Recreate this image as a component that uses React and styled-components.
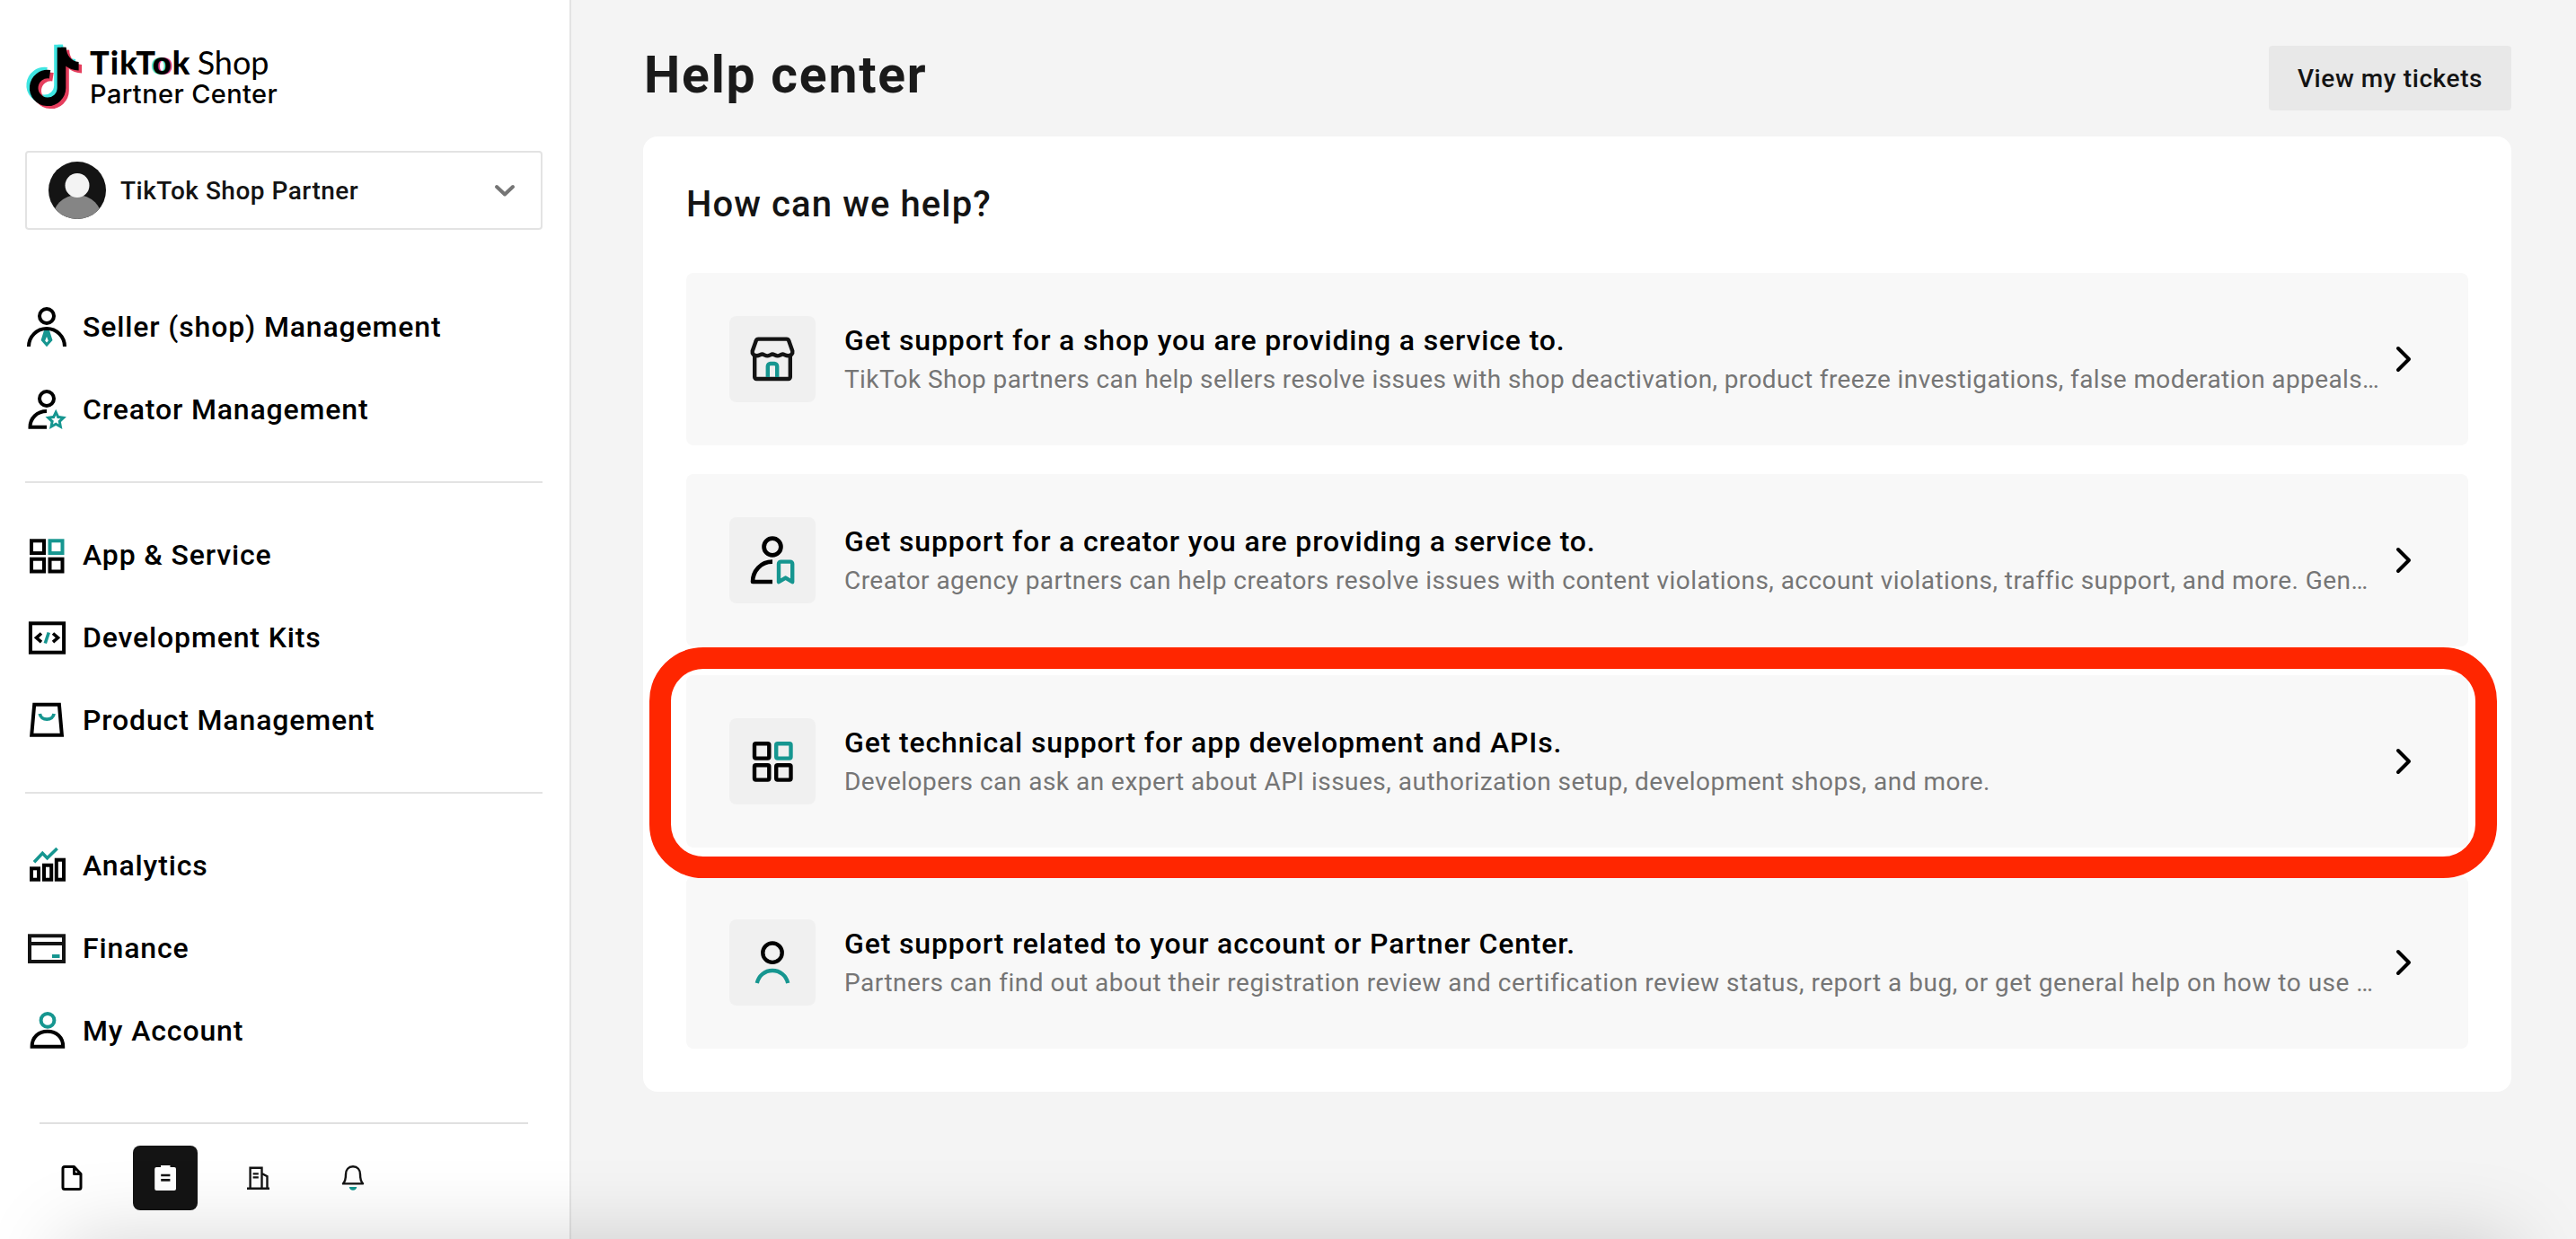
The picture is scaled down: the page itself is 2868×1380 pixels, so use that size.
import React from "react";
import styled, { createGlobalStyle } from "styled-components";

const BLACK = "#000000";
const INK = "#141414";
const GRAY = "#757575";
const LINE = "#e3e3e3";
const TEAL = "#169690";
const CYAN = "#3fe5e1";
const RED = "#e53e5d";
const HIGHLIGHT = "#ff2600";

const NAV_GROUPS = [
  [
    { label: "Seller (shop) Management", Icon: SellerIcon },
    { label: "Creator Management", Icon: CreatorIcon },
  ],
  [
    { label: "App & Service", Icon: AppIcon },
    { label: "Development Kits", Icon: DevIcon },
    { label: "Product Management", Icon: ProductIcon },
  ],
  [
    { label: "Analytics", Icon: AnalyticsIcon },
    { label: "Finance", Icon: FinanceIcon },
    { label: "My Account", Icon: AccountIcon },
  ],
];

const TOPICS = [
  {
    title: "Get support for a shop you are providing a service to.",
    desc: "TikTok Shop partners can help sellers resolve issues with shop deactivation, product freeze investigations, false moderation appeals…",
    tracking: 0.39,
    Icon: ShopArt,
  },
  {
    title: "Get support for a creator you are providing a service to.",
    desc: "Creator agency partners can help creators resolve issues with content violations, account violations, traffic support, and more. Gen…",
    tracking: 0.45,
    Icon: CreatorArt,
  },
  {
    title: "Get technical support for app development and APIs.",
    desc: "Developers can ask an expert about API issues, authorization setup, development shops, and more.",
    tracking: 0.49,
    Icon: AppArt,
    highlighted: true,
  },
  {
    title: "Get support related to your account or Partner Center.",
    desc: "Partners can find out about their registration review and certification review status, report a bug, or get general help on how to use …",
    tracking: 0.51,
    Icon: AccountArt,
  },
];

export default function App() {
  return (
    <Page>
      <GlobalStyle />
      <Sidebar>
        <Logo>
          <LogoMark />
          <LogoText>
            <LogoLine>
              <Brand>
                TikT<GlitchO>o</GlitchO>k
              </Brand>
              <Shop>Shop</Shop>
            </LogoLine>
            <SubLine>Partner Center</SubLine>
          </LogoText>
        </Logo>
        <AccountSelect>
          <Avatar />
          <AccountName>TikTok Shop Partner</AccountName>
          <svg width="24" height="16" viewBox="0 0 24 16" fill="none">
            <path d="M3 4l9 8.5L21 4" stroke="#757575" strokeWidth="4" strokeLinecap="round" strokeLinejoin="round" />
          </svg>
        </AccountSelect>
        <Nav>
          {NAV_GROUPS.map((group, i) => (
            <NavGroup key={i}>
              {group.map(({ label, Icon }) => (
                <NavItem key={label}>
                  <Icon />
                  <span>{label}</span>
                </NavItem>
              ))}
            </NavGroup>
          ))}
        </Nav>
        <Tools>
          <ToolBtn>
            <DocIcon />
          </ToolBtn>
          <ToolBtn $active>
            <ClipboardIcon />
          </ToolBtn>
          <ToolBtn>
            <BuildingIcon />
          </ToolBtn>
          <ToolBtn>
            <BellIcon />
          </ToolBtn>
        </Tools>
      </Sidebar>
      <Main>
        <Header>
          <Title>Help center</Title>
          <TicketsBtn>View my tickets</TicketsBtn>
        </Header>
        <Card>
          <CardTitle>How can we help?</CardTitle>
          <TopicList>
            {TOPICS.map(({ title, desc, tracking, Icon, highlighted }) => (
              <Topic key={title}>
                <TopicIcon>
                  <Icon />
                </TopicIcon>
                <TopicText>
                  <TopicTitle>{title}</TopicTitle>
                  <TopicDesc $tracking={tracking}>{desc}</TopicDesc>
                </TopicText>
                <Arrow />
                {highlighted && <Highlight />}
              </Topic>
            ))}
          </TopicList>
        </Card>
      </Main>
      <BottomShade />
    </Page>
  );
}

function LogoMark() {
  const note = (
    <>
      <path d="M40.5 6.7V52a15.4 15.4 0 1 1-13-15.3" fill="none" stroke="currentColor" strokeWidth="9.6" />
      <path d="M40 6.7h5.6c.4 9 6 15.6 14 16.2v9.6c-6-.2-11-2.2-15-5.2z" fill="currentColor" />
    </>
  );
  return (
    <svg width="68" height="78" viewBox="0 0 68 78">
      <g color={CYAN} transform="translate(-3.5 -3)">{note}</g>
      <g color={RED} transform="translate(3.5 3)">{note}</g>
      <g color={BLACK}>{note}</g>
    </svg>
  );
}

function Avatar() {
  return (
    <svg width="64" height="64" viewBox="0 0 64 64">
      <clipPath id="avatar">
        <circle cx="32" cy="32" r="32" />
      </clipPath>
      <g clipPath="url(#avatar)">
        <rect width="64" height="64" fill={INK} />
        <circle cx="32" cy="65" r="28" fill="#858585" />
        <circle cx="32" cy="26.5" r="13.5" fill="#f3f3f3" />
      </g>
    </svg>
  );
}

function NavSvg({ children, color = BLACK }) {
  return (
    <svg width="48" height="48" viewBox="0 0 48 48" fill="none" stroke={color} strokeWidth="4">
      {children}
    </svg>
  );
}

function SellerIcon() {
  return (
    <NavSvg>
      <circle cx="24" cy="12" r="8" />
      <path d="M4 46a20 20 0 0 1 40 0" />
      <path
        d="M21 28h6l3.5 11L24 46.2 17.6 39zM24 35l-1.8 4.5L24 41.5l1.8-2z"
        fill={TEAL}
        fillRule="evenodd"
        stroke="none"
      />
    </NavSvg>
  );
}

function CreatorIcon() {
  return (
    <NavSvg>
      <circle cx="24" cy="12" r="8" />
      <path d="M24 26C13 26 5.5 34 5.5 43.7H24" />
      <path
        d="M34.2 23.7l3.5 7.4 8.2 1.1-6 5.7 1.5 8.1-7.2-4-7.2 4 1.5-8.1-6-5.7 8.2-1.1zM34.2 30.5L32.7 34l-3.7.3 2.8 2.5-.8 3.6 3.2-1.9 3.2 1.9-.8-3.6 2.8-2.5-3.7-.3z"
        fill={TEAL}
        fillRule="evenodd"
        stroke="none"
      />
    </NavSvg>
  );
}

function AppIcon() {
  return (
    <NavSvg>
      <rect x="7" y="8.3" width="14" height="13.8" />
      <rect x="27.5" y="8.3" width="14" height="13.8" stroke={TEAL} />
      <rect x="7" y="28.7" width="14" height="13.8" />
      <rect x="27.5" y="28.7" width="14" height="13.8" />
    </NavSvg>
  );
}

function DevIcon() {
  return (
    <NavSvg>
      <rect x="5.9" y="8.3" width="37.2" height="32.4" />
      <path d="M18 19.5l-5.5 4.8 5.5 4.8M31 19.5l5.5 4.8-5.5 4.8" strokeWidth="3.6" />
      <path d="M26.3 18.5l-4 12" stroke={TEAL} strokeWidth="3.6" />
    </NavSvg>
  );
}

function ProductIcon() {
  return (
    <NavSvg>
      <path d="M10.2 6.7h27.7l3 34H7.2z" />
      <path d="M16.3 17a8 7.3 0 0 0 15.8 0" stroke={TEAL} strokeWidth="3.8" />
    </NavSvg>
  );
}

function AnalyticsIcon() {
  return (
    <NavSvg>
      <rect x="7" y="27.3" width="8" height="12.4" />
      <rect x="21" y="23.7" width="8.2" height="16" />
      <rect x="34.8" y="17.7" width="8.2" height="22" />
      <path d="M10 20.3l9.3-10 5.3 5.5L35.6 5" stroke={TEAL} strokeWidth="3.6" />
    </NavSvg>
  );
}

function FinanceIcon() {
  return (
    <NavSvg color={INK}>
      <rect x="5" y="10.3" width="38" height="28.7" />
      <path d="M5 18.9h38" />
      <rect x="30" y="31" width="8.5" height="4" fill={TEAL} stroke="none" />
    </NavSvg>
  );
}

function AccountIcon() {
  return (
    <NavSvg>
      <circle cx="25" cy="12.4" r="7.4" stroke={TEAL} />
      <path d="M7.6 41.7c0-10.5 7.5-17 17.3-17s17.3 6.5 17.3 17z" />
    </NavSvg>
  );
}

function ToolSvg({ children }) {
  return (
    <svg width="72" height="72" viewBox="0 0 72 72" fill="none" stroke={INK} strokeWidth="2.4">
      {children}
    </svg>
  );
}

function DocIcon() {
  return (
    <ToolSvg>
      <g stroke={BLACK} strokeWidth="3" strokeLinejoin="round">
        <path d="M28 23.5h10.5l7.5 8V46.5a2 2 0 0 1-2 2H28a2 2 0 0 1-2-2v-21a2 2 0 0 1 2-2z" />
        <path d="M38.5 24v7.5H46" />
      </g>
    </ToolSvg>
  );
}

function ClipboardIcon() {
  return (
    <ToolSvg>
      <path
        d="M31 22h10.5v2H46a2 2 0 0 1 2 2v22a2 2 0 0 1-2 2H26.2a2 2 0 0 1-2-2V26a2 2 0 0 1 2-2H31z"
        fill="#fff"
        stroke="none"
      />
      <path d="M31.2 33h10.2M31.2 38.4h10.2" strokeWidth="2.7" />
    </ToolSvg>
  );
}

function BuildingIcon() {
  return (
    <ToolSvg>
      <path d="M23 47.8h25M26.6 47V24.7h12.9V47M39.5 31l6 3.3V47M29.6 31.4h6.2M29.6 35.4h6.2" />
    </ToolSvg>
  );
}

function BellIcon() {
  return (
    <ToolSvg>
      <path d="M26 42.4c2.2-2.5 3-5.4 3-10.4 0-5.2 2.9-8.7 8-8.7s8 3.5 8 8.7c0 5 .8 7.9 3 10.4z" strokeLinejoin="round" />
      <path d="M32.7 46h8.6c-.3 2.4-2 3.8-4.3 3.8s-4-1.4-4.3-3.8z" fill={TEAL} stroke="none" />
    </ToolSvg>
  );
}

function ArtSvg({ children }) {
  return (
    <svg width="96" height="96" viewBox="0 0 96 96" fill="none" stroke={BLACK} strokeWidth="4.4" strokeLinejoin="round">
      {children}
    </svg>
  );
}

function ShopArt() {
  return (
    <ArtSvg>
      <g stroke={INK} strokeLinecap="round">
        <path d="M32.5 25.6h31a3 3 0 0 1 2.9 2.3L70.3 39c.6 3.5-1.8 5.2-5 5.2-2.7 0-4.2-1.7-5.8-1.7s-3.3 1.9-5.8 1.9-4-1.9-5.7-1.9-3.3 1.9-5.7 1.9-4-1.9-5.8-1.9-3.1 1.7-5.8 1.7c-3.2 0-5.6-1.7-5-5.2l3.9-11.1a3 3 0 0 1 2.9-2.3z" />
        <path d="M28.2 44.5V68a2 2 0 0 0 2 2h35.6a2 2 0 0 0 2-2V44.5" />
      </g>
      <path d="M42.8 68V56a3 3 0 0 1 3-3h4.4a3 3 0 0 1 3 3v12" stroke={TEAL} />
    </ArtSvg>
  );
}

function CreatorArt() {
  return (
    <ArtSvg>
      <circle cx="48" cy="33" r="9.4" strokeWidth="4.8" />
      <path d="M48 49.6C35 49.6 26 60 26 72h22" strokeWidth="4.6" />
      <path d="M57.4 49.6h10.4a2.4 2.4 0 0 1 2.4 2.4v20.2l-7.6-4.6-7.6 4.6V52a2.4 2.4 0 0 1 2.4-2.4z" stroke={TEAL} />
    </ArtSvg>
  );
}

function AppArt() {
  return (
    <ArtSvg>
      <rect x="28" y="28.3" width="16.3" height="16.3" rx="1.5" />
      <rect x="52.2" y="28.3" width="16.3" height="16.3" rx="1.5" stroke={TEAL} />
      <rect x="28" y="52.3" width="16.3" height="16.3" rx="1.5" />
      <rect x="52.2" y="52.3" width="16.3" height="16.3" rx="1.5" />
    </ArtSvg>
  );
}

function AccountArt() {
  return (
    <ArtSvg>
      <circle cx="48" cy="37.2" r="10.7" />
      <path d="M30.8 71C32.7 62.7 39.5 57 48 57s15.3 5.7 17.2 14" stroke={TEAL} />
    </ArtSvg>
  );
}

function Arrow() {
  return (
    <svg width="20" height="32" viewBox="0 0 20 32" fill="none">
      <path d="M4 4l12 12L4 28" stroke="#000" strokeWidth="4" strokeLinecap="round" strokeLinejoin="round" />
    </svg>
  );
}

const GlobalStyle = createGlobalStyle`
  * {
    box-sizing: border-box;
  }
  body {
    margin: 0;
    overflow: hidden;
    font-family: Roboto, "Liberation Sans", sans-serif;
    color: ${BLACK};
  }
  svg {
    display: block;
    flex: none;
  }
`;
const Page = styled.div`
  position: relative;
  display: flex;
  width: 2868px;
  height: 1380px;
  overflow: hidden;
  background: #f4f4f4;
`;
const Sidebar = styled.aside`
  flex: none;
  width: 636px;
  padding: 46px 30px 0 28px;
  background: white;
  border-right: 2px solid ${LINE};
`;
const Logo = styled.div`
  display: flex;
  gap: 4px;
`;
const LogoText = styled.div`
  padding-top: 5px;
  line-height: 36px;
  white-space: nowrap;
`;
const LogoLine = styled.div`
  display: flex;
  gap: 7px;
  height: 36px;
  font-family: Lato, "Open Sans", sans-serif;
  font-size: 36px;
`;
const Brand = styled.span`
  font-weight: 900;
  letter-spacing: 1.2px;
`;
const GlitchO = styled.span`
  text-shadow: -2px 0 ${CYAN}, 2px 0 ${RED};
`;
const Shop = styled.span`
  font-weight: 400;
`;
const SubLine = styled.div`
  font-family: Inter, "Open Sans", sans-serif;
  font-size: 29px;
  font-weight: 500;
  letter-spacing: 0.4px;
`;
const AccountSelect = styled.div`
  display: flex;
  align-items: center;
  width: 576px;
  height: 88px;
  margin-top: 44px;
  padding: 0 28px 0 24px;
  border: 2px solid ${LINE};
  border-radius: 4px;
`;
const AccountName = styled.span`
  flex: 1;
  margin-left: 16px;
  font-size: 28px;
  font-weight: 500;
  letter-spacing: 0.5px;
  color: ${INK};
`;
const Nav = styled.nav`
  margin-top: 84px;
`;
const NavGroup = styled.div`
  display: flex;
  flex-direction: column;
  gap: 44px;
  & + & {
    margin-top: 56px;
    padding-top: 56px;
    border-top: 2px solid ${LINE};
  }
`;
const NavItem = styled.div`
  display: flex;
  align-items: center;
  gap: 16px;
  height: 48px;
  font-size: 32px;
  font-weight: 500;
  letter-spacing: 0.86px;
  white-space: nowrap;
`;
const Tools = styled.div`
  display: flex;
  gap: 32px;
  margin: 78px 16px 0;
  padding-top: 24px;
  border-top: 2px solid #e0e0e0;
`;
const ToolBtn = styled.div`
  width: 72px;
  height: 72px;
  border-radius: 8px;
  background: ${({ $active }) => ($active ? INK : "transparent")};
`;
const Main = styled.main`
  flex: 1;
  padding: 51px 72px 0 80px;
`;
const Header = styled.header`
  display: flex;
  justify-content: space-between;
  height: 72px;
`;
const Title = styled.h1`
  margin: 0 0 0 1px;
  font-size: 57px;
  font-weight: 700;
  line-height: 66px;
  letter-spacing: 1.8px;
  color: #1a1a1a;
`;
const TicketsBtn = styled.div`
  display: flex;
  justify-content: center;
  align-items: center;
  width: 270px;
  border-radius: 4px;
  background: #e8e8e8;
  color: ${INK};
  font-size: 28px;
  font-weight: 500;
  letter-spacing: 0.6px;
`;
const Card = styled.section`
  margin-top: 29px;
  padding: 48px;
  border-radius: 16px;
  background: white;
`;
const CardTitle = styled.h2`
  margin: 0 0 48px;
  font-size: 40px;
  font-weight: 500;
  line-height: 56px;
  letter-spacing: 1.1px;
  color: ${INK};
`;
const TopicList = styled.div`
  display: flex;
  flex-direction: column;
  gap: 32px;
`;
const Topic = styled.div`
  position: relative;
  display: flex;
  align-items: center;
  height: 192px;
  padding: 0 62px 0 48px;
  border-radius: 8px;
  background: #f8f8f8;
`;
const TopicIcon = styled.div`
  border-radius: 8px;
  background: #f0f0f0;
`;
const TopicText = styled.div`
  flex: 1;
  min-width: 0;
  padding: 2px 0 0 32px;
  line-height: 44px;
  white-space: nowrap;
`;
const TopicTitle = styled.div`
  font-size: 32px;
  font-weight: 500;
  letter-spacing: 0.86px;
`;
const TopicDesc = styled.div`
  font-size: 28px;
  letter-spacing: ${({ $tracking }) => $tracking}px;
  color: ${GRAY};
`;
const Highlight = styled.div`
  position: absolute;
  top: -31px;
  right: -32px;
  bottom: -34px;
  left: -41px;
  z-index: 1;
  border: 24px solid ${HIGHLIGHT};
  border-radius: 60px;
`;
const BottomShade = styled.div`
  position: absolute;
  top: 100%;
  left: 70px;
  right: 70px;
  height: 120px;
  box-shadow: 0 0 90px rgba(0, 0, 0, 0.17);
`;
